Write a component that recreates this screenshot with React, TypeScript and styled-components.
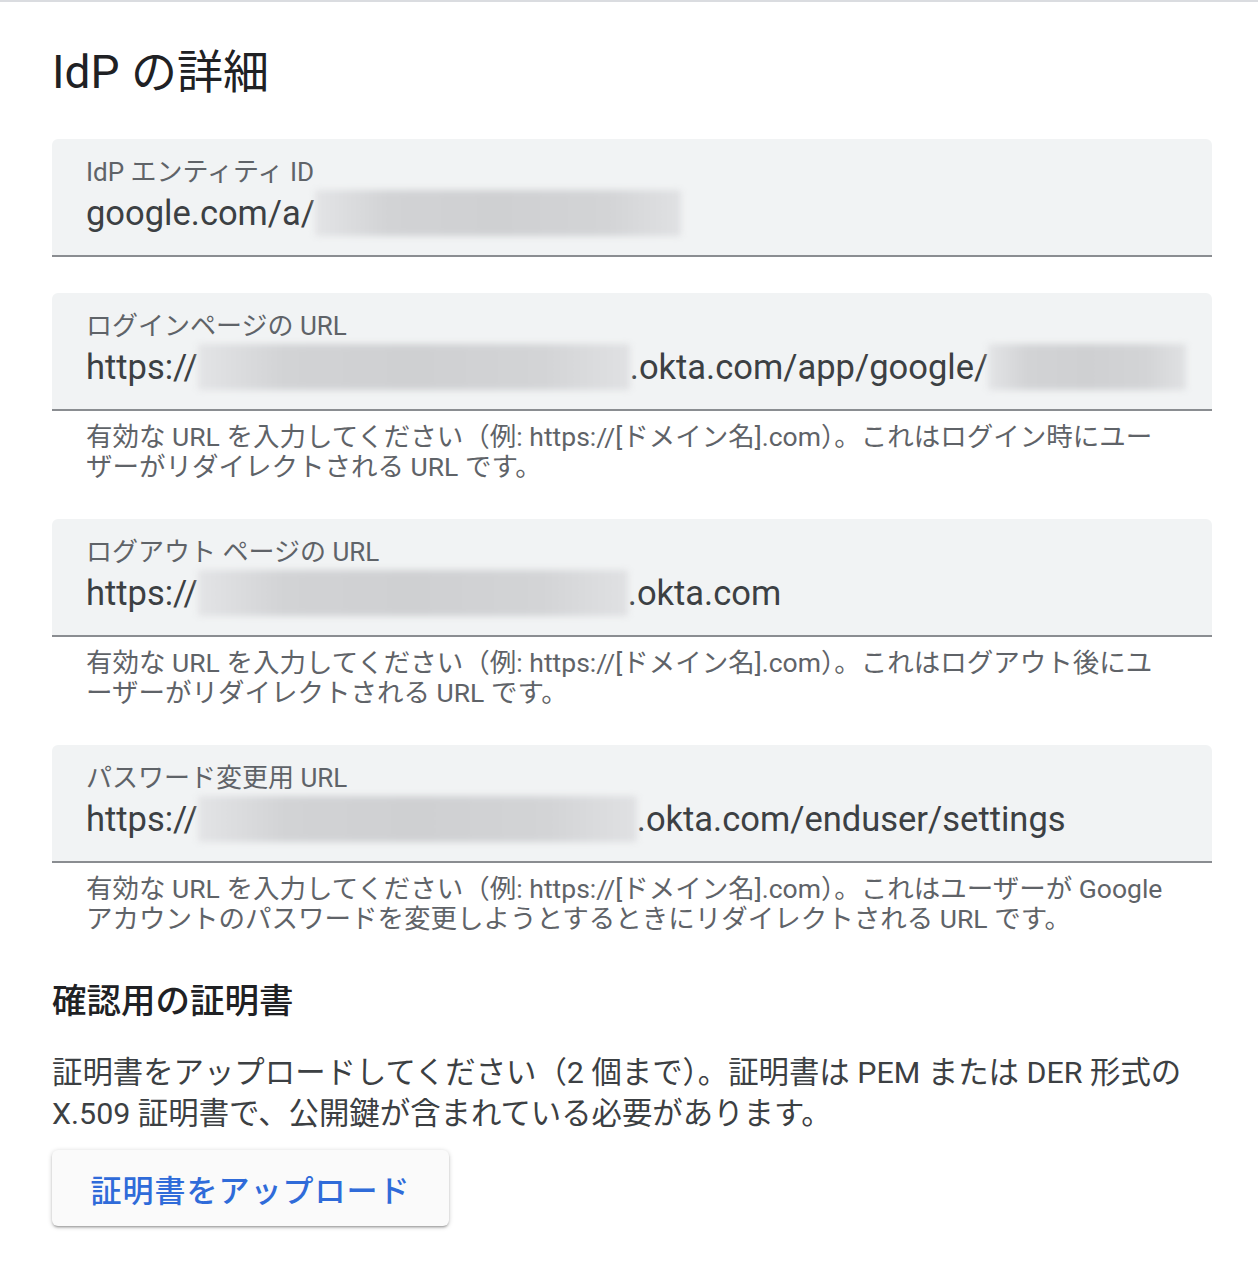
import React from "react";
import styled, { createGlobalStyle } from "styled-components";

const Global = createGlobalStyle`
  html, body { margin: 0; padding: 0; background: #fff; }
  body { font-family: Roboto, "Noto Sans CJK JP", sans-serif; -webkit-font-smoothing: antialiased; }
`;

const Page = styled.div`
  border-top: 2px solid #dadce0;
  padding: 40px 46px 40px 52px;
  width: 1160px;
`;

const Title = styled.h1`
  margin: 0 0 37px;
  font-size: 46px;
  line-height: 60px;
  font-weight: 400;
  color: #202124;
`;

const FieldGroup = styled.div<{ $gap: number }>`
  margin-bottom: ${(p) => p.$gap}px;
`;

const Field = styled.div`
  background: #f1f3f4;
  border-radius: 6px 6px 0 0;
  border-bottom: 2px solid #8a8d91;
  box-sizing: border-box;
  height: 118px;
  padding: 18px 34px 0;
  display: flex;
  flex-direction: column;
`;

const Label = styled.div`
  font-size: 26px;
  line-height: 30px;
  color: #5f6368;
  white-space: nowrap;
`;

const Value = styled.div`
  margin-top: 2px;
  font-size: 34.5px;
  line-height: 48px;
  color: #3c4043;
  white-space: nowrap;
  display: flex;
  align-items: center;
`;

const Blur = styled.span<{ $w: number }>`
  display: inline-block;
  flex: none;
  width: ${(p) => p.$w}px;
  height: 46px;
  background: linear-gradient(90deg, #e3e4e6 0%, #d2d3d5 20%, #cfd0d2 50%, #d3d4d6 80%, #e0e1e3 100%);
  filter: blur(3px);
  border-radius: 2px;
`;

const Helper = styled.div`
  padding: 11px 34px 0;
  font-size: 26.5px;
  line-height: 30px;
  color: #5f6368;
`;

const SubTitle = styled.h2`
  margin: 0 0 31px;
  font-size: 34.5px;
  line-height: 40px;
  font-weight: 500;
  color: #202124;
`;

const Para = styled.p`
  margin: 0 0 16px;
  font-size: 30.4px;
  line-height: 41px;
  color: #3c4043;
`;

const Button = styled.button`
  display: block;
  width: 397px;
  height: 76px;
  border: none;
  border-radius: 6px;
  background: #fafafa;
  box-shadow: 0 2px 2px rgba(0,0,0,0.14), 0 3px 1px -2px rgba(0,0,0,0.12), 0 1px 5px rgba(0,0,0,0.2);
  color: #2f6bd9;
  font-family: Roboto, "Noto Sans CJK JP", sans-serif;
  font-size: 31px;
  font-weight: 500;
  letter-spacing: 1px;
  cursor: pointer;
`;

export default function App() {
  return (
    <>
      <Global />
      <Page>
        <Title>IdP の詳細</Title>
        <FieldGroup $gap={36}>
          <Field>
            <Label>IdP エンティティ ID</Label>
            <Value>google.com/a/<Blur $w={366} /></Value>
          </Field>
        </FieldGroup>
        <FieldGroup $gap={37}>
          <Field>
            <Label>ログインページの URL</Label>
            <Value>https://<Blur $w={432} />.okta.com/app/google/<Blur $w={198} /></Value>
          </Field>
          <Helper>有効な URL を入力してください（例: https://[ドメイン名].com）。これはログイン時にユーザーがリダイレクトされる URL です。</Helper>
        </FieldGroup>
        <FieldGroup $gap={37}>
          <Field>
            <Label>ログアウト ページの URL</Label>
            <Value>https://<Blur $w={430} />.okta.com</Value>
          </Field>
          <Helper>有効な URL を入力してください（例: https://[ドメイン名].com）。これはログアウト後にユーザーがリダイレクトされる URL です。</Helper>
        </FieldGroup>
        <FieldGroup $gap={47}>
          <Field>
            <Label>パスワード変更用 URL</Label>
            <Value>https://<Blur $w={439} />.okta.com/enduser/settings</Value>
          </Field>
          <Helper>有効な URL を入力してください（例: https://[ドメイン名].com）。これはユーザーが Google アカウントのパスワードを変更しようとするときにリダイレクトされる URL です。</Helper>
        </FieldGroup>
        <SubTitle>確認用の証明書</SubTitle>
        <Para>証明書をアップロードしてください（2 個まで）。証明書は PEM または DER 形式の X.509 証明書で、公開鍵が含まれている必要があります。</Para>
        <Button>証明書をアップロード</Button>
      </Page>
    </>
  );
}
